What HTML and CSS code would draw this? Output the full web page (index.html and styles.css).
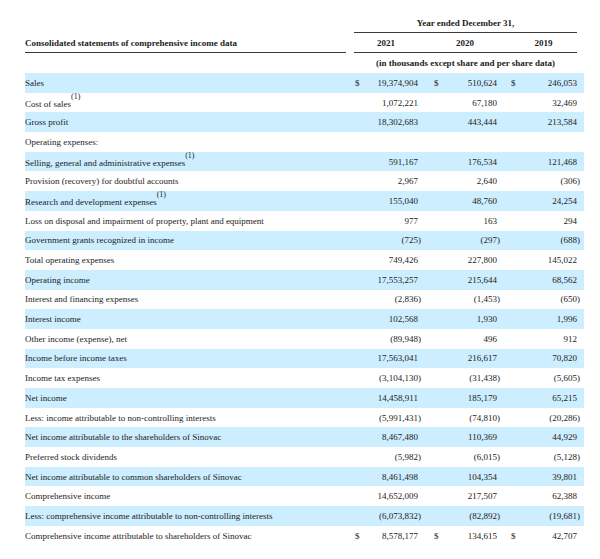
FILE: index.html
```html
<!DOCTYPE html>
<html>
<head>
<meta charset="utf-8">
<link rel="stylesheet" href="styles.css">
</head>
<body>
<div class="sheet">
  <div class="row head-a">
    <div class="span-years rule">Year ended December 31,</div>
  </div>
  <div class="row head-b">
    <div class="label rule bold">Consolidated statements of comprehensive income data</div>
    <div class="yr y1 rule">2021</div>
    <div class="yr g1 rule"></div>
    <div class="yr y2 rule">2020</div>
    <div class="yr g2 rule"></div>
    <div class="yr y3 rule">2019</div>
  </div>
  <div class="row head-c">
    <div class="span-years bold">(in thousands except share and per share data)</div>
  </div>

  <div class="row band">
    <div class="label">Sales</div>
    <div class="d1">$</div><div class="n1">19,374,904</div>
    <div class="d2">$</div><div class="n2">510,624</div>
    <div class="d3">$</div><div class="n3">246,053</div>
  </div>
  <div class="row">
    <div class="label">Cost of sales<span class="fn">(1)</span></div>
    <div class="n1">1,072,221</div><div class="n2">67,180</div><div class="n3">32,469</div>
  </div>
  <div class="row band">
    <div class="label">Gross profit</div>
    <div class="n1">18,302,683</div><div class="n2">443,444</div><div class="n3">213,584</div>
  </div>
  <div class="row">
    <div class="label">Operating expenses:</div>
  </div>
  <div class="row band">
    <div class="label">Selling, general and administrative expenses<span class="fn">(1)</span></div>
    <div class="n1">591,167</div><div class="n2">176,534</div><div class="n3">121,468</div>
  </div>
  <div class="row">
    <div class="label">Provision (recovery) for doubtful accounts</div>
    <div class="n1">2,967</div><div class="n2">2,640</div><div class="n3">(306</div><div class="p3">)</div>
  </div>
  <div class="row band">
    <div class="label">Research and development expenses<span class="fn">(1)</span></div>
    <div class="n1">155,040</div><div class="n2">48,760</div><div class="n3">24,254</div>
  </div>
  <div class="row">
    <div class="label">Loss on disposal and impairment of property, plant and equipment</div>
    <div class="n1">977</div><div class="n2">163</div><div class="n3">294</div>
  </div>
  <div class="row band">
    <div class="label">Government grants recognized in income</div>
    <div class="n1">(725</div><div class="p1">)</div><div class="n2">(297</div><div class="p2">)</div><div class="n3">(688</div><div class="p3">)</div>
  </div>
  <div class="row">
    <div class="label">Total operating expenses</div>
    <div class="n1">749,426</div><div class="n2">227,800</div><div class="n3">145,022</div>
  </div>
  <div class="row band">
    <div class="label">Operating income</div>
    <div class="n1">17,553,257</div><div class="n2">215,644</div><div class="n3">68,562</div>
  </div>
  <div class="row">
    <div class="label">Interest and financing expenses</div>
    <div class="n1">(2,836</div><div class="p1">)</div><div class="n2">(1,453</div><div class="p2">)</div><div class="n3">(650</div><div class="p3">)</div>
  </div>
  <div class="row band">
    <div class="label">Interest income</div>
    <div class="n1">102,568</div><div class="n2">1,930</div><div class="n3">1,996</div>
  </div>
  <div class="row">
    <div class="label">Other income (expense), net</div>
    <div class="n1">(89,948</div><div class="p1">)</div><div class="n2">496</div><div class="n3">912</div>
  </div>
  <div class="row band">
    <div class="label">Income before income taxes</div>
    <div class="n1">17,563,041</div><div class="n2">216,617</div><div class="n3">70,820</div>
  </div>
  <div class="row">
    <div class="label">Income tax expenses</div>
    <div class="n1">(3,104,130</div><div class="p1">)</div><div class="n2">(31,438</div><div class="p2">)</div><div class="n3">(5,605</div><div class="p3">)</div>
  </div>
  <div class="row band">
    <div class="label">Net income</div>
    <div class="n1">14,458,911</div><div class="n2">185,179</div><div class="n3">65,215</div>
  </div>
  <div class="row">
    <div class="label">Less: income attributable to non-controlling interests</div>
    <div class="n1">(5,991,431</div><div class="p1">)</div><div class="n2">(74,810</div><div class="p2">)</div><div class="n3">(20,286</div><div class="p3">)</div>
  </div>
  <div class="row band">
    <div class="label">Net income attributable to the shareholders of Sinovac</div>
    <div class="n1">8,467,480</div><div class="n2">110,369</div><div class="n3">44,929</div>
  </div>
  <div class="row">
    <div class="label">Preferred stock dividends</div>
    <div class="n1">(5,982</div><div class="p1">)</div><div class="n2">(6,015</div><div class="p2">)</div><div class="n3">(5,128</div><div class="p3">)</div>
  </div>
  <div class="row band">
    <div class="label">Net income attributable to common shareholders of Sinovac</div>
    <div class="n1">8,461,498</div><div class="n2">104,354</div><div class="n3">39,801</div>
  </div>
  <div class="row">
    <div class="label">Comprehensive income</div>
    <div class="n1">14,652,009</div><div class="n2">217,507</div><div class="n3">62,388</div>
  </div>
  <div class="row band">
    <div class="label">Less: comprehensive income attributable to non-controlling interests</div>
    <div class="n1">(6,073,832</div><div class="p1">)</div><div class="n2">(82,892</div><div class="p2">)</div><div class="n3">(19,681</div><div class="p3">)</div>
  </div>
  <div class="row">
    <div class="label">Comprehensive income attributable to shareholders of Sinovac</div>
    <div class="d1">$</div><div class="n1">8,578,177</div>
    <div class="d2">$</div><div class="n2">134,615</div>
    <div class="d3">$</div><div class="n3">42,707</div>
  </div>
</div>
</body>
</html>
```

FILE: styles.css
```css
html, body {
  margin: 0;
  padding: 0;
  background: #ffffff;
}

.sheet {
  width: 559px;
  padding: 13px 0 0 25px;
  font-family: "Liberation Serif", "Times New Roman", serif;
  font-size: 9px;
  color: #1c1c1c;
}

.row {
  display: grid;
  grid-template-columns: 321px 8px 12px 52px 7px 8px 12px 52px 7px 6px 12px 55px 7px;
  height: 19.7px;
  align-items: center;
  white-space: nowrap;
}

.head-a,
.head-b,
.head-c {
  height: 20px;
  align-items: stretch;
}

.head-a > div,
.head-b > div {
  display: flex;
  align-items: center;
}

.head-c > div {
  display: flex;
  align-items: center;
  justify-content: center;
}

.band {
  background: #cceeff;
}

.bold {
  font-weight: bold;
}

.rule {
  border-bottom: 1px solid #3a3a3a;
}

.span-years {
  grid-column: 3 / 13;
  justify-content: center;
  font-weight: bold;
}

.label {
  grid-column: 1;
}

.yr {
  justify-content: center;
  font-weight: bold;
}

.y1 { grid-column: 3 / 5; }
.g1 { grid-column: 5 / 7; }
.y2 { grid-column: 7 / 9; }
.g2 { grid-column: 9 / 11; }
.y3 { grid-column: 11 / 13; }

.d1, .d2, .d3 {
  padding-left: 1px;
}

.d1 { grid-column: 3; }
.n1 { grid-column: 4; text-align: right; }
.p1 { grid-column: 5; }
.d2 { grid-column: 7; }
.n2 { grid-column: 8; text-align: right; }
.p2 { grid-column: 9; }
.d3 { grid-column: 11; }
.n3 { grid-column: 12; text-align: right; }
.p3 { grid-column: 13; }

.fn {
  font-size: 8px;
  vertical-align: 8px;
  line-height: 0;
}
```
